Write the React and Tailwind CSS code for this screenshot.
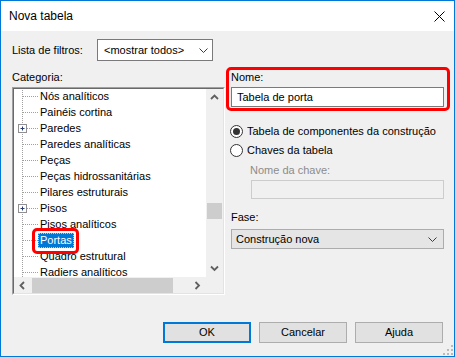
import React from 'react';

const items = [
  { label: 'Nós analíticos' },
  { label: 'Painéis cortina' },
  { label: 'Paredes', plus: true },
  { label: 'Paredes analíticas' },
  { label: 'Peças' },
  { label: 'Peças hidrossanitárias' },
  { label: 'Pilares estruturais' },
  { label: 'Pisos', plus: true },
  { label: 'Pisos analíticos' },
  { label: 'Portas', selected: true },
  { label: 'Quadro estrutural' },
  { label: 'Radiers analíticos' },
];

function DropChevron() {
  return (
    <svg width="9" height="5" viewBox="0 0 9 5" className="shrink-0">
      <path d="M0.5 0.5L4.5 4.5L8.5 0.5" fill="none" stroke="#3c3c3c" strokeWidth="1" />
    </svg>
  );
}

function ScrollArrow({ dir }) {
  const d = {
    up: 'M1 5L4.5 1.5L8 5',
    down: 'M1 1.5L4.5 5L8 1.5',
    left: 'M5 1L1.5 4.5L5 8',
    right: 'M1.5 1L5 4.5L1.5 8',
  }[dir];
  const vertical = dir === 'up' || dir === 'down';
  return (
    <svg width={vertical ? 9 : 7} height={vertical ? 7 : 9} className="shrink-0">
      <path d={d} fill="none" stroke="#606060" strokeWidth="1.8" />
    </svg>
  );
}

function TreeRow({ label, plus, selected }) {
  return (
    <div className="flex h-[16px] items-center leading-[16px]">
      <svg width="24" height="16" className="shrink-0">
        <line x1="8.5" y1="0" x2="8.5" y2="16" stroke="#a0a0a0" strokeDasharray="1 1" />
        <line x1={plus ? 13 : 9} y1="8.5" x2="24" y2="8.5" stroke="#a0a0a0" strokeDasharray="1 1" />
        {plus && (
          <>
            <rect x="4.5" y="4.5" width="8" height="8" fill="white" stroke="#8f8f8f" />
            <path d="M6.5 8.5h4M8.5 6.5v4" stroke="#233a74" />
          </>
        )}
      </svg>
      {selected ? (
        <span className="relative px-[2px] bg-[#0078d7] text-white h-[15px] leading-[15px] outline outline-1 outline-dotted outline-[#9fd0ff] -outline-offset-1">
          {label}
          <span className="absolute -left-[6px] -right-[5px] -top-[5px] -bottom-[6px] border-[3px] border-[#ff0000] rounded-[5px]" />
        </span>
      ) : (
        <span className="pl-[2px] whitespace-nowrap">{label}</span>
      )}
    </div>
  );
}

function Radio({ checked, label }) {
  return (
    <div className="h-[16px] flex items-center pl-[4px] gap-[4px]">
      <div className="w-[13px] h-[13px] rounded-full border border-[#333] bg-white flex items-center justify-center">
        {checked && <div className="w-[7px] h-[7px] rounded-full bg-[#333]" />}
      </div>
      <span>{label}</span>
    </div>
  );
}

export default function App() {
  return (
    <div className="w-[455px] h-[357px] border border-[#0078d7] bg-[#f0f0f0] flex flex-col text-[11px] text-black font-['Segoe_UI','Liberation_Sans',Arial,sans-serif]">
      {/* Title bar */}
      <div className="h-[30px] bg-white flex items-center justify-between pl-[8px] pr-[9px] shrink-0">
        <span className="text-[12px]">Nova tabela</span>
        <svg width="11" height="11">
          <path d="M0.5 0.5L10.5 10.5M10.5 0.5L0.5 10.5" stroke="#000" strokeWidth="1" />
        </svg>
      </div>

      <div className="flex-1 flex flex-col relative">
        <div className="flex pl-[11px]">
          {/* Left column */}
          <div className="flex flex-col w-[214px]">
            <div className="mt-[8px] h-[22px] flex items-center">
              <span className="w-[85px]">Lista de filtros:</span>
              <div className="w-[116px] h-[22px] border border-[#7a7a7a] bg-white flex items-center justify-between pl-[6px] pr-[4px]">
                <span>&lt;mostrar todos&gt;</span>
                <DropChevron />
              </div>
            </div>
            <div className="mt-[8px] h-[16px] leading-[16px]">Categoria:</div>
            <div className="mt-[2px] w-[213px] h-[208px] border border-t-[#a0a0a0] border-l-[#a0a0a0] border-r-white border-b-white">
              <div className="w-full h-full border border-t-[#696969] border-l-[#696969] border-r-[#e3e3e3] border-b-[#e3e3e3] bg-white flex flex-col">
                <div className="flex flex-1 min-h-0">
                  <div className="flex-1 overflow-hidden">
                    <div className="-mt-[1px]">
                      {items.map((it) => (
                        <TreeRow key={it.label} {...it} />
                      ))}
                    </div>
                  </div>
                  <div className="w-[17px] bg-[#f0f0f0] flex flex-col">
                    <div className="h-[17px] flex items-center justify-center">
                      <ScrollArrow dir="up" />
                    </div>
                    <div className="flex-1 flex justify-center">
                      <div className="mt-[97px] w-[15px] h-[16px] bg-[#cdcdcd]" />
                    </div>
                    <div className="h-[17px] flex items-center justify-center">
                      <ScrollArrow dir="down" />
                    </div>
                  </div>
                </div>
                <div className="h-[16px] flex bg-[#f0f0f0] shrink-0">
                  <div className="w-[17px] flex items-center justify-center">
                    <ScrollArrow dir="left" />
                  </div>
                  <div className="flex-1 flex items-center">
                    <div className="ml-[1px] w-[141px] h-[15px] bg-[#cdcdcd]" />
                  </div>
                  <div className="w-[17px] flex items-center justify-center">
                    <ScrollArrow dir="right" />
                  </div>
                  <div className="w-[17px]" />
                </div>
              </div>
            </div>
          </div>

          {/* Right column */}
          <div className="w-[224px] mt-[36px] flex flex-col">
            <div className="h-[44px] border-[3px] border-[#ff0000] rounded-[5px] px-[2px]">
              <div className="h-[14px] leading-[14px]">Nome:</div>
              <div className="mt-[3px] w-[213px] h-[20px] border border-[#7a7a7a] bg-white flex items-center pl-[5px]">
                Tabela de porta
              </div>
            </div>
            <div className="mt-[12px]">
              <Radio checked label="Tabela de componentes da construção" />
            </div>
            <div className="mt-[3px]">
              <Radio label="Chaves da tabela" />
            </div>
            <div className="mt-[5px] h-[14px] leading-[14px] pl-[24px] text-[#8c8c8c]">Nome da chave:</div>
            <div className="mt-[3px] ml-[25px] w-[193px] h-[19px] border border-[#cccccc] bg-[#f0f0f0]" />
            <div className="mt-[11px] h-[14px] leading-[14px] pl-[5px]">Fase:</div>
            <div className="mt-[5px] ml-[5px] w-[213px] h-[20px] border border-[#acacac] bg-[#e5e5e5] flex items-center justify-between pl-[4px] pr-[6px]">
              <span>Construção nova</span>
              <DropChevron />
            </div>
          </div>
        </div>

        {/* Buttons */}
        <div className="mt-auto mb-[13px] flex justify-end gap-[8px] pr-[11px]">
          <div className="w-[88px] h-[21px] border-2 border-[#0078d7] bg-[#e1e1e1] flex items-center justify-center">OK</div>
          <div className="w-[88px] h-[21px] border border-[#adadad] bg-[#e1e1e1] flex items-center justify-center">Cancelar</div>
          <div className="w-[88px] h-[21px] border border-[#adadad] bg-[#e1e1e1] flex items-center justify-center">Ajuda</div>
        </div>

        {/* Resize grip */}
        <svg width="12" height="12" className="absolute right-0 bottom-0">
          {[
            [8, 0],
            [4, 4],
            [8, 4],
            [0, 8],
            [4, 8],
            [8, 8],
          ].map(([x, y]) => (
            <rect key={`${x}-${y}`} x={x + 1} y={y + 1} width="2" height="2" fill="#b9b9b9" />
          ))}
        </svg>
      </div>
    </div>
  );
}
